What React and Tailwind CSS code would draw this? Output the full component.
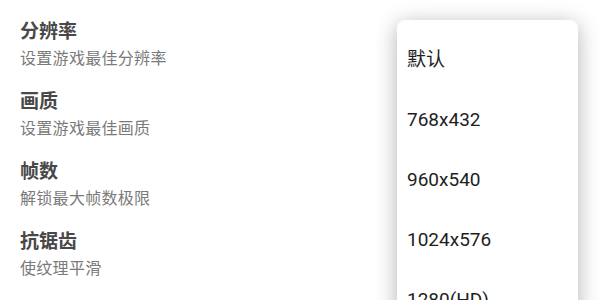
import React from "react";

const settings = [
  { title: "分辨率", desc: "设置游戏最佳分辨率" },
  { title: "画质", desc: "设置游戏最佳画质" },
  { title: "帧数", desc: "解锁最大帧数极限" },
  { title: "抗锯齿", desc: "使纹理平滑" },
];

const options = ["默认", "768x432", "960x540", "1024x576", "1280(HD)"];

export default function App() {
  return (
    <div
      className="relative w-[600px] h-[300px] overflow-hidden bg-white"
      style={{ fontFamily: 'Roboto, "Noto Sans CJK SC", sans-serif' }}
    >
      <div className="flex flex-col gap-[20px] pl-[20px] pt-[19px]">
        {settings.map((s) => (
          <div key={s.title} className="flex flex-col gap-[4px]">
            <div className="h-[26px] leading-[26px] text-[19px] font-bold text-[#484848]">
              {s.title}
            </div>
            <div className="h-[20px] leading-[20px] text-[16px] text-[#7a7a7a] tracking-[0.3px]">
              {s.desc}
            </div>
          </div>
        ))}
      </div>

      <div className="absolute left-[397px] top-[20px] w-[181px] h-[320px] bg-white rounded-[8px] shadow-[0_4px_22px_rgba(0,0,0,0.3)] pt-[10px]">
        {options.map((o) => (
          <div
            key={o}
            className="h-[60px] flex items-center px-[10px] text-[19px] text-[#1e1e1e]"
          >
            {o}
          </div>
        ))}
      </div>
    </div>
  );
}
